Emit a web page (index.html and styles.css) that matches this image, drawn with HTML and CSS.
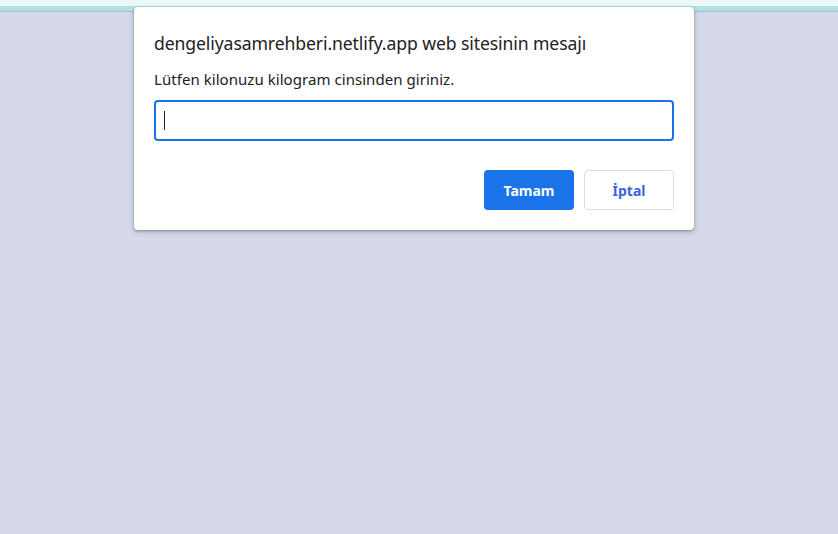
FILE: index.html
```html
<!DOCTYPE html>
<html lang="tr">
<head>
<meta charset="utf-8">
<title>Mesaj</title>
<link rel="stylesheet" href="styles.css">
</head>
<body>
<div class="topbar"><div class="strip-light"></div><div class="strip-teal"></div></div>
<main class="page"></main>
<div class="dialog" role="dialog">
  <div class="title">dengeliyasamrehberi.netlify.app web sitesinin mesajı</div>
  <div class="message">Lütfen kilonuzu kilogram cinsinden giriniz.</div>
  <div class="field"><span class="caret"></span></div>
  <div class="actions">
    <button class="btn primary">Tamam</button>
    <button class="btn secondary">İptal</button>
  </div>
</div>
</body>
</html>
```
FILE: styles.css
```css
html, body {
  margin: 0;
  padding: 0;
  height: 100%;
}
body {
  background: #d6d9ea;
  font-family: "Noto Sans", "Open Sans", sans-serif;
  overflow: hidden;
}
.topbar {
  display: flex;
  flex-direction: column;
}
.strip-light {
  height: 6px;
  background: #ebf8f8;
}
.strip-teal {
  height: 5px;
  background: #b3e1e3;
  border-bottom: 1px solid #94c3c8;
}
.dialog {
  position: absolute;
  left: 134px;
  top: 7px;
  width: 560px;
  height: 223px;
  box-sizing: border-box;
  background: #fff;
  border-radius: 4px;
  box-shadow: 0 1px 3px rgba(60, 64, 80, 0.45), 0 2px 6px rgba(60, 64, 80, 0.2);
  padding: 24px 20px 20px 20px;
  display: flex;
  flex-direction: column;
}
.title {
  font-size: 17.6px;
  color: #202124;
  line-height: 24px;
  letter-spacing: -0.1px;
}
.message {
  margin-top: 14px;
  font-size: 15px;
  letter-spacing: 0.05px;
  color: #202124;
  line-height: 20px;
}
.field {
  margin-top: 11px;
  height: 41px;
  flex: none;
  box-sizing: border-box;
  border: 2px solid #1a73e8;
  border-radius: 4px;
  display: flex;
  align-items: center;
  padding-left: 8px;
}
.caret {
  width: 1px;
  height: 19px;
  background: #202124;
}
.actions {
  margin-top: 29px;
  display: flex;
  justify-content: flex-end;
  gap: 10px;
}
.btn {
  width: 90px;
  height: 40px;
  border-radius: 4px;
  font-family: "Noto Sans", "Open Sans", sans-serif;
  font-weight: 700;
  font-size: 14px;
  cursor: pointer;
}
.primary {
  background: #1a73e8;
  color: #fff;
  border: none;
}
.secondary {
  background: #fff;
  color: #3b62e0;
  border: 1px solid #dadce0;
}
```
